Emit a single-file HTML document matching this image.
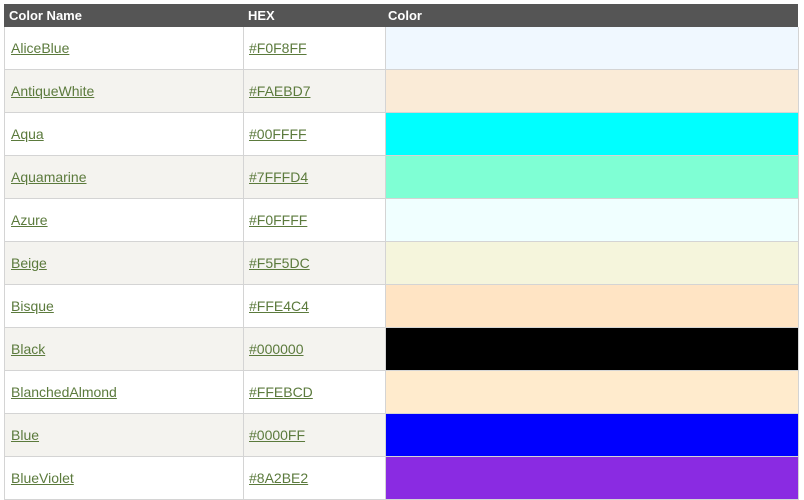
<!DOCTYPE html><html><head><style>
body{margin:0;background:#fff;font-family:"Liberation Sans",Arial,sans-serif;}
.h{position:absolute;left:4px;top:4px;width:794px;height:23px;background:#555;color:#fff;font-weight:bold;font-size:13px;}
.h span{position:absolute;top:4px}
.r{position:absolute;left:4px;width:793px;height:42px;border:1px solid #d4d4d4;border-top:none;}
.r a{position:absolute;top:13px;color:#5b7a3c;font-size:14px;text-decoration:underline;}
.c{position:absolute;top:0;height:42px;}
</style></head><body>
<div class="h"><span style="left:5px">Color Name</span><span style="left:244px">HEX</span><span style="left:384px">Color</span></div>
<div id="t"></div>
<script>
var d=[["AliceBlue","#F0F8FF"],["AntiqueWhite","#FAEBD7"],["Aqua","#00FFFF"],["Aquamarine","#7FFFD4"],["Azure","#F0FFFF"],["Beige","#F5F5DC"],["Bisque","#FFE4C4"],["Black","#000000"],["BlanchedAlmond","#FFEBCD"],["Blue","#0000FF"],["BlueViolet","#8A2BE2"]];
var h="";d.forEach(function(x,i){var bg=i%2?"#f4f3ef":"#fff";
h+='<div class="r" style="top:'+(27+43*i)+'px;background:'+bg+'"><a style="left:6px">'+x[0]+'</a><div class="c" style="left:238px;width:1px;background:#d4d4d4"></div><a style="left:244px">'+x[1]+'</a><div class="c" style="left:380px;width:1px;background:#d4d4d4"></div><div class="c" style="left:381px;width:412px;background:'+x[1]+'"></div></div>';});
document.getElementById("t").innerHTML=h;
</script></body></html>
